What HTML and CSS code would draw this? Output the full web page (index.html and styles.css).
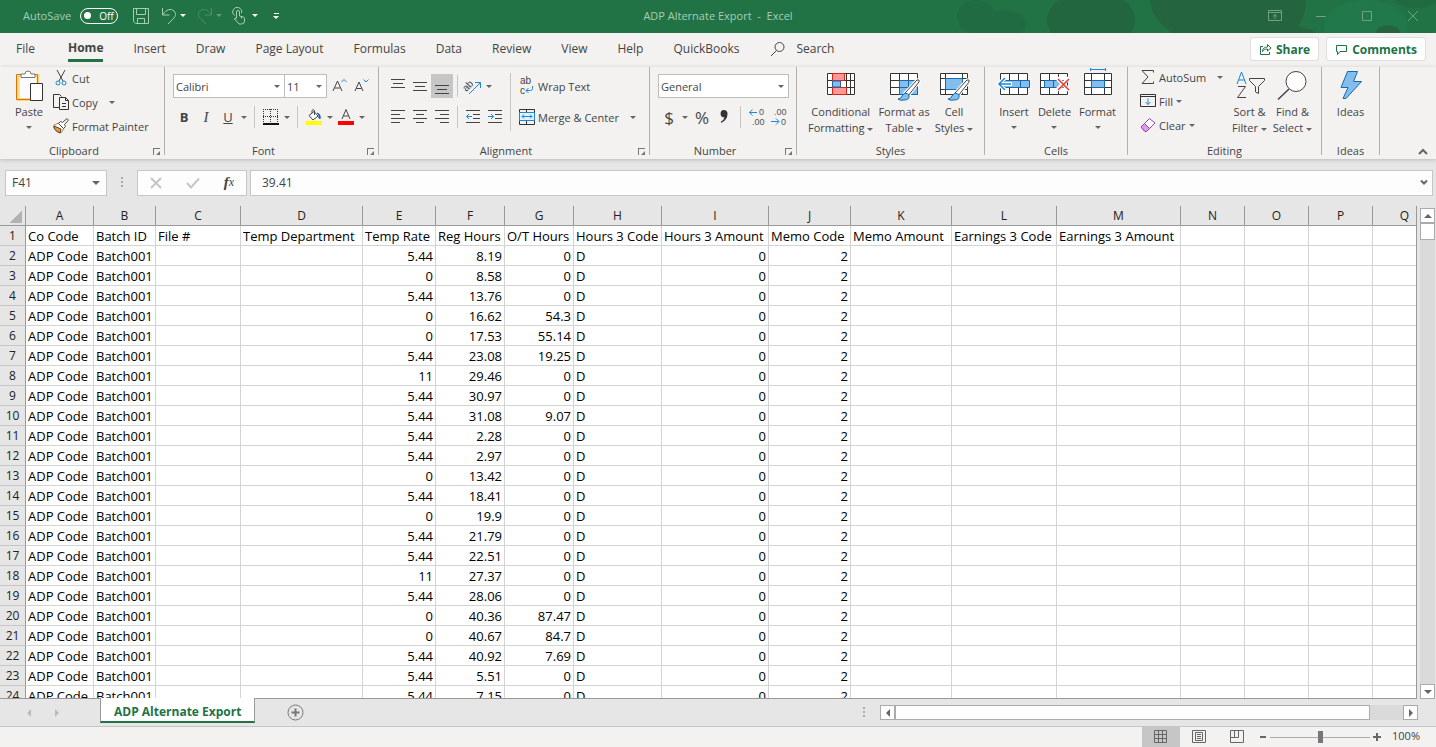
FILE: index.html
```html
<!DOCTYPE html>
<html lang="en">
<head>
    <meta charset="UTF-8">
    <meta name="viewport" content="width=device-width, initial-scale=1.0">
    <title>ADP Alternate Export - Excel</title>
    <link rel="stylesheet" href="styles.css">
</head>
<body>
    <header class="titlebar">
      <svg class="pattern" width="500" height="33" viewBox="0 0 500 33">
        <g fill="#216b43">
          <ellipse cx="40" cy="17" rx="19" ry="17"/>
          <ellipse cx="66" cy="24" rx="24" ry="14"/>
          <ellipse cx="480" cy="0" rx="22" ry="8"/>
        </g>
        <ellipse cx="155" cy="20" rx="44" ry="30" fill="#226640"/>
        <path d="M214 0h156q0 16-8 26l14 4 4 3H236q-22-16-22-33z" fill="#24653f"/>
        <ellipse cx="430" cy="26" rx="42" ry="26" fill="#21784a"/>
        <ellipse cx="452" cy="33" rx="12" ry="8" fill="#24653f"/>
      </svg>
      <label class="autosave">AutoSave
        <button class="switch"><span class="knob"></span>Off</button>
      </label>
      <div class="quick">
        <button aria-label="Save"><svg width="18" height="18" viewBox="0 0 18 18"><path d="M1.5 1.5h15v15h-13l-2-2zM4.500 1.500v6h9v-6M5.500 16.500v-5h7v5"/></svg></button>
        <button class="undo" aria-label="Undo"><svg width="16" height="18" viewBox="0 0 16 18"><path d="M1.500 1v7h7M2 7.500C5 2.500 10 1 13 4c3 3 1 6-1 8l-5 5"/></svg></button>
        <button aria-label="Undo list"><i class="caret"></i></button>
        <button class="off redo" aria-label="Redo"><svg width="16" height="18" viewBox="0 0 16 18"><path d="M14.500 1v7h-7M14 7.500C11 2.500 6 1 3 4c-3 3-1 6 1 8l5 5"/></svg></button>
        <button class="off" aria-label="Redo list"><i class="caret"></i></button>
        <button class="touch" aria-label="Touch mode"><svg width="14" height="18" viewBox="0 0 14 18"><path d="M2.500 8.500A4.500 4.500 0 1 1 9.500 6M4.500 11V5a1.500 1.500 0 0 1 3 0v4l4 1q1 .5 1 2v2q0 3-3 3H7L2.500 12q0-2 2 0M9.500 9.500v2"/></svg></button>
        <button aria-label="Touch mode list"><i class="caret"></i></button>
        <button class="more" aria-label="Customize toolbar"><i class="bar"></i><i class="caret"></i></button>
      </div>
      <h1>ADP Alternate Export&nbsp; -&nbsp; Excel</h1>
      <div class="window">
        <button aria-label="Ribbon display"><svg width="14" height="12" viewBox="0 0 14 12"><path d="M.5 .5h13v10H.5zM.5 2.500h13M7 9V4.500M5 6.500l2-2 2 2"/></svg></button>
        <button aria-label="Minimize"><svg width="12" height="12" viewBox="0 0 12 12"><path d="M1 6.500h10"/></svg></button>
        <button aria-label="Maximize"><svg width="12" height="12" viewBox="0 0 12 12"><path d="M1.500 1.500h9v9h-9z"/></svg></button>
        <button aria-label="Close"><svg width="12" height="12" viewBox="0 0 12 12"><path d="M1 1l10 10M11 1L1 11"/></svg></button>
      </div>
    </header>

    <nav class="tabs">
      <a href="#">File</a>
      <a href="#" class="current">Home</a>
      <a href="#">Insert</a>
      <a href="#">Draw</a>
      <a href="#">Page Layout</a>
      <a href="#">Formulas</a>
      <a href="#">Data</a>
      <a href="#">Review</a>
      <a href="#">View</a>
      <a href="#">Help</a>
      <a href="#">QuickBooks</a>
      <a href="#" class="search"><svg width="16" height="16" viewBox="0 0 16 16"><circle cx="9.500" cy="6" r="4.500"/><path d="M6.500 9.500L1 15"/></svg>Search</a>
      <div class="actions">
        <button><svg width="13" height="13" viewBox="0 0 13 13"><path d="M4 3.500H1.500v8h9V9M3.500 8.500c0-3 2-4.500 5-4.500V1.500L12 5 8.500 8V6c-2 0-4 .5-5 2.500z"/></svg>Share</button>
        <button><svg width="13" height="13" viewBox="0 0 13 13"><path d="M1.500 2.500h10v6H5l-2.500 3v-3h-1z"/></svg>Comments</button>
      </div>
    </nav>

    <main class="ribbon">
      <section class="group clipboard">
        <div class="tools">
          <button class="big paste">
            <svg width="32" height="32" viewBox="0 0 32 32"><path d="M5 4.500h20v24H5z" fill="#fbfbfb" stroke="#ffd67a" stroke-width="3"/><path d="M3.500 3.500h21v25h-21z" fill="none" stroke="#d9740e"/><path d="M8 6.500V3h4q0-3 3-3t3 3h4v3.500z" fill="#fff" stroke="#777"/><path d="M17.500 12.500h12v17h-12z" fill="#fff" stroke="#333"/></svg>
            <span>Paste</span><i class="caret"></i>
          </button>
          <div class="stack">
            <button><svg width="16" height="16" viewBox="0 0 16 16"><path d="M4 0l6 11M12 0L6 11" stroke="#444" fill="none"/><circle cx="5" cy="13" r="2" stroke="#1b87d6" fill="none"/><circle cx="11" cy="13" r="2" stroke="#1b87d6" fill="none"/></svg>Cut</button>
            <button><svg width="16" height="16" viewBox="0 0 16 16"><path d="M7 13.500H.5V.5h6l2 2M6.500 3.500h6l3 3v9h-9zM12.500 3.500v3h3M9 9.500h4M9 12.500h4" fill="none" stroke="#333"/></svg>Copy<i class="caret"></i></button>
            <button><svg width="16" height="16" viewBox="0 0 16 16"><path d="M1 7l5-2 5 5-3 5q-4-1-7-5z" fill="#fff" stroke="#e07b17"/><path d="M1 8l7 3-1 4q-4-1-6-5z" fill="#f4973b"/><path d="M5.500 5.500l2-2 2 1L14 .500l1.500 1.500-4 4.500 1 2-2 2z" fill="#fff" stroke="#444"/></svg>Format Painter</button>
          </div>
        </div>
        <h2>Clipboard</h2><i class="launch"></i>
      </section>

      <section class="group font">
        <div class="rows">
          <div class="row">
            <span class="combo family"><select aria-label="Font"><option>Calibri</option></select></span>
            <span class="combo size"><select aria-label="Font size"><option>11</option></select></span>
            <button class="ib grow" aria-label="Increase font size"><svg width="16" height="16" viewBox="0 0 16 16"><path d="M1 13L5.500 3 10 13M2.500 10h6" stroke="#444" fill="none"/><path d="M9.500 4L12 1.500 14.500 4" stroke="#1b87d6" fill="none"/></svg></button>
            <button class="ib" aria-label="Decrease font size"><svg width="16" height="16" viewBox="0 0 16 16"><path d="M1 13L5 4 9 13M2.500 10.500h5" stroke="#444" fill="none"/><path d="M9.500 1.500L12 4l2.500-2.500" stroke="#1b87d6" fill="none"/></svg></button>
          </div>
          <div class="row">
            <button class="ib bold">B</button><button class="ib italic">I</button><button class="ib under">U</button><button class="drop" aria-label="Underline styles"><i class="caret"></i></button>
            <i class="sep"></i>
            <button class="ib" aria-label="Borders"><svg width="16" height="16" viewBox="0 0 16 16"><path d="M0 .5h16M0 7.500h16M.5 0v14M7.500 0v14M14.500 0v14" stroke="#333" stroke-dasharray="1 1"/><path d="M0 15h16" stroke="#111" stroke-width="2"/></svg></button><button class="drop" aria-label="Border styles"><i class="caret"></i></button>
            <i class="sep"></i>
            <button class="ib" aria-label="Fill color"><svg width="16" height="16" viewBox="0 0 16 16"><path d="M3 6.500l5-4 4 4.500-5 4zM6 4V1.500q1.500-2 2.500 0V6" stroke="#444" fill="#fff"/><path d="M11 4q4 1 3 6-2-1-1-4z" fill="#1565a8" stroke="#1565a8"/><path d="M0 12h16v4H0z" fill="#ff0" stroke="none"/></svg></button><button class="drop" aria-label="Fill colors"><i class="caret"></i></button>
            <button class="ib" aria-label="Font color"><svg width="16" height="16" viewBox="0 0 16 16"><path d="M4 10L8 .500 12 10M5.500 7h5" stroke="#444" fill="none"/><path d="M0 12h16v4H0z" fill="red" stroke="none"/></svg></button><button class="drop" aria-label="Font colors"><i class="caret"></i></button>
          </div>
        </div>
        <h2>Font</h2><i class="launch"></i>
      </section>

      <section class="group alignment">
        <div class="tools">
          <div class="rows">
            <div class="row">
              <button class="ib" aria-label="Top align"><svg width="14" height="16" viewBox="0 0 14 16"><path d="M0 1.500h14M2 5.500h10M0 9.500h14"/></svg></button>
              <button class="ib" aria-label="Middle align"><svg width="14" height="16" viewBox="0 0 14 16"><path d="M0 4.500h14M2 8.500h10M0 12.500h14"/></svg></button>
              <button class="ib active" aria-label="Bottom align"><svg width="14" height="16" viewBox="0 0 14 16"><path d="M0 7.500h14M2 11.500h10M0 15.500h14"/></svg></button>
              <i class="sep"></i>
              <button class="ib" aria-label="Orientation"><svg width="18" height="18" viewBox="0 0 18 18"><text x="-2" y="11" transform="rotate(-45 5 8)" class="glyph">ab</text><path d="M5 17L16 6M11 5.500h5.500V11" stroke="#1b87d6"/></svg></button><button class="drop" aria-label="Orientation list"><i class="caret"></i></button>
            </div>
            <div class="row">
              <button class="ib" aria-label="Align left"><svg width="14" height="16" viewBox="0 0 14 16"><path d="M0 1.500h14M0 5.500h9M0 9.500h14M0 13.500h9"/></svg></button>
              <button class="ib" aria-label="Center"><svg width="14" height="16" viewBox="0 0 14 16"><path d="M0 1.500h14M3 5.500h8M0 9.500h14M3 13.500h8"/></svg></button>
              <button class="ib" aria-label="Align right"><svg width="14" height="16" viewBox="0 0 14 16"><path d="M0 1.500h14M5 5.500h9M0 9.500h14M5 13.500h9"/></svg></button>
              <i class="sep"></i>
              <button class="ib" aria-label="Decrease indent"><svg width="14" height="16" viewBox="0 0 14 16"><path d="M0 1.500h14M7 5.500h7M7 9.500h7M0 13.500h14"/><path d="M6 7.500H.5M3 5L.5 7.500 3 10" stroke="#1b87d6"/></svg></button>
              <button class="ib" aria-label="Increase indent"><svg width="14" height="16" viewBox="0 0 14 16"><path d="M0 1.500h14M7 5.500h7M7 9.500h7M0 13.500h14"/><path d="M0 7.500h5.500M3 5l2.500 2.500L3 10" stroke="#1b87d6"/></svg></button>
            </div>
          </div>
          <i class="sep tall"></i>
          <div class="rows text">
            <div class="row"><button><svg width="16" height="18" viewBox="0 0 16 18"><text x="1" y="7" class="glyph">ab</text><text x="1" y="17" class="glyph">c</text><path d="M13.500 9v2.500q0 2-2 2H7M9.500 11L7 13.500 9.500 16" stroke="#1b87d6"/></svg>Wrap Text</button></div>
            <div class="row"><button><svg width="16" height="16" viewBox="0 0 16 16"><path d="M.5 .5h15v15H.5zM7.500 0v4M7.500 12v4" stroke="#333"/><path d="M.5 3.500h15v8H.5z" fill="#e6f2fb" stroke="#1b87d6"/><path d="M3 7.500h10M5 5.500l-2 2 2 2M11 5.500l2 2-2 2" stroke="#1b87d6"/></svg>Merge &amp; Center<i class="caret"></i></button></div>
          </div>
        </div>
        <h2>Alignment</h2><i class="launch"></i>
      </section>

      <section class="group number">
        <div class="rows">
          <div class="row"><span class="combo format"><select aria-label="Number format"><option>General</option></select></span></div>
          <div class="row">
            <button class="ib symbol">$</button><button class="drop" aria-label="Currency list"><i class="caret"></i></button>
            <button class="ib symbol percentage">%</button>
            <button class="ib" aria-label="Comma style"><svg width="10" height="16" viewBox="0 0 10 16"><path d="M5 1a3.500 3.500 0 0 1 3.500 4Q8.500 11 2 14v-1.500Q5 11 5.500 8.300A3.600 3.600 0 1 1 5 1z" fill="#333" stroke="none"/></svg></button>
            <i class="sep"></i>
            <button class="ib" aria-label="Increase decimal"><svg width="16" height="18" viewBox="0 0 16 18"><text x="10" y="7" class="digits">0</text><text x="3" y="17" class="digits">.00</text><path d="M8 4.500H.5M3.500 1.500l-3 3 3 3" stroke="#1b87d6"/></svg></button>
            <button class="ib" aria-label="Decrease decimal"><svg width="16" height="18" viewBox="0 0 16 18"><text x="3" y="7" class="digits">.00</text><text x="10" y="17" class="digits">0</text><path d="M0 13.500h7.500M5 10.500l3 3-3 3" stroke="#1b87d6"/></svg></button>
          </div>
        </div>
        <h2>Number</h2><i class="launch"></i>
      </section>

      <section class="group styles">
        <div class="tools">
          <button class="big"><svg width="32" height="32" viewBox="0 0 32 32"><path d="M2.500 2.500h27v21h-27zM2 9.500h28M2 16.500h28M7.500 2v22M21.500 2v22M25.500 2v22" stroke="#333" fill="#fff"/><path d="M7.500 2.500h12v7h-12zM7.500 16.500h14v7h-14z" fill="#ff9797" stroke="#e0241b"/><path d="M7.500 10h8v6h-8z" fill="#83beec" stroke="#1769b0"/></svg><span>Conditional</span><span>Formatting<i class="caret"></i></span></button>
          <button class="big"><svg width="32" height="32" viewBox="0 0 32 32"><path d="M2.500 2.500h27v21h-27zM2 9.500h28M2 16.500h28M11.500 2v22M20.500 2v22" stroke="#333" fill="#fff"/><path d="M11.500 9.500h18v14h-18z" fill="#83beec"/><path d="M11.500 9.500h18v14h-18zM20.500 9.500v14M11.500 16.500h18" stroke="#1769b0"/><path d="M17 22L29 9q3-1 2 2L20 25z" fill="#fff" stroke="#fff" stroke-width="3"/><path d="M17 22L29 9q3-1 2 2L20 25z" fill="#fff" stroke="#444"/><path d="M10 28q3 0 4-3 3-5 7-1 1 5-5 5-4 1-6-1z" fill="#83beec" stroke="#1769b0"/></svg><span>Format as</span><span>Table<i class="caret"></i></span></button>
          <button class="big"><svg width="32" height="32" viewBox="0 0 32 32"><path d="M2.500 2.500h27v21h-27zM2 7.500h28M2 18.500h28M7.500 2v22M24.500 2v22" stroke="#333" fill="#fff"/><path d="M7.500 7.500h17v11h-17z" fill="#83beec" stroke="#1769b0"/><path d="M17 22L29 9q3-1 2 2L20 25z" fill="#fff" stroke="#fff" stroke-width="3"/><path d="M17 22L29 9q3-1 2 2L20 25z" fill="#fff" stroke="#444"/><path d="M10 28q3 0 4-3 3-5 7-1 1 5-5 5-4 1-6-1z" fill="#83beec" stroke="#1769b0"/></svg><span>Cell</span><span>Styles<i class="caret"></i></span></button>
        </div>
        <h2>Styles</h2>
      </section>

      <section class="group cells">
        <div class="tools">
          <button class="big"><svg width="32" height="32" viewBox="0 0 32 32"><path d="M2.500 2.500h27v21h-27zM2 9.500h28M2 16.500h28M11.500 2v22M20.500 2v22" stroke="#333" fill="#fff"/><path d="M6.500 9.500h25v7h-25zM22.500 9v8" fill="#83beec" stroke="#1769b0"/><path d="M14 13H1.500M7 7l-6 6 6 6" stroke="#fff" stroke-width="4"/><path d="M13 13H1.500M7 7l-6 6 6 6" stroke="#1b87d6" stroke-width="1.500"/></svg><span>Insert</span><i class="caret"></i></button>
          <button class="big"><svg width="32" height="32" viewBox="0 0 32 32"><path d="M2.500 2.500h27v21h-27zM2 9.500h28M2 16.500h28M11.500 2v22M20.500 2v22" stroke="#333" fill="#fff"/><path d="M6.500 9.500h16v7h-16zM15.500 9v8" fill="#83beec" stroke="#1769b0"/><path d="M19 7l12 12M31 7L19 19" stroke="#fff" stroke-width="4"/><path d="M20 8l11 11M31 8L20 19" stroke="#e8382e" stroke-width="1.500"/></svg><span>Delete</span><i class="caret"></i></button>
          <button class="big"><svg width="32" height="32" viewBox="0 0 32 32"><path d="M2.500 2.500h27v21h-27zM2 9.500h28M2 16.500h28M9.500 2v22M22.500 2v22" stroke="#333" fill="#fff"/><path d="M9.500 9.500h13v7h-13z" fill="#83beec" stroke="#1769b0"/><path d="M8.500 -3v3M23.500 -3v3M8 -1.500h16" stroke="#1b87d6"/></svg><span>Format</span><i class="caret"></i></button>
        </div>
        <h2>Cells</h2>
      </section>

      <section class="group editing">
        <div class="tools">
          <div class="stack">
            <button class="sum"><svg width="16" height="16" viewBox="0 0 16 16"><path d="M13.500 3.500v-2H2l6 6.500-6 6.500h11.500v-2"/></svg>AutoSum<i class="caret"></i></button>
            <button><svg width="16" height="16" viewBox="0 0 16 16"><path d="M.5 1.500h15v12H.5zM.5 3.500h15" stroke="#333"/><path d="M8 5.500v6M5.500 9L8 11.500 10.500 9" stroke="#1b87d6"/></svg>Fill<i class="caret"></i></button>
            <button><svg width="16" height="16" viewBox="0 0 16 16"><path d="M1 10l8.500-8.500L15 6l-8.500 8.500H5z" fill="#fff" stroke="#9b3fae"/><path d="M1 10l3.500-3.500 5 5-3 3H5z" fill="#dd9fe8" stroke="#9b3fae"/></svg>Clear<i class="caret"></i></button>
          </div>
          <button class="big"><svg width="32" height="32" viewBox="0 0 32 32"><path d="M3 13L7.500 1 12 13M4.500 9h6" stroke="#1b87d6"/><path d="M4 15.500h7.500L3.500 26.500H12M15.500 7.500h15v2l-6 6v7l-3-1.500v-5.500l-6-6z" stroke="#444"/></svg><span>Sort &amp;</span><span>Filter<i class="caret"></i></span></button>
          <button class="big"><svg width="32" height="32" viewBox="0 0 32 32"><circle cx="19" cy="10.500" r="10" fill="#fff" stroke="#444"/><path d="M12 18L1 28.500" stroke="#444" stroke-width="1.500"/></svg><span>Find &amp;</span><span>Select<i class="caret"></i></span></button>
        </div>
        <h2>Editing</h2>
      </section>

      <section class="group ideas">
        <div class="tools">
          <button class="big"><svg width="32" height="32" viewBox="0 0 32 32"><path d="M12.500 .500h10l-4 10h8L11 27.500H8l5-11H6z" fill="#83beec" stroke="#1769b0"/></svg><span>Ideas</span></button>
        </div>
        <h2>Ideas</h2>
      </section>
      <button class="collapse" aria-label="Collapse ribbon"><svg width="10" height="8" viewBox="0 0 10 8"><path d="M1 6l4-4 4 4" stroke="#666" stroke-width="2"/></svg></button>
    </main>

    <section class="formula">
      <button class="namebox"><span>F41</span><i class="caret large"></i></button>
      <i class="dots"></i>
      <div class="check">
        <button aria-label="Cancel"><svg width="12" height="12" viewBox="0 0 12 12"><path d="M1 1l10 10M11 1L1 11" stroke="#c6c6c6" stroke-width="2"/></svg></button>
        <button aria-label="Enter"><svg width="14" height="12" viewBox="0 0 14 12"><path d="M1 6l4 4.500L13 1.500" stroke="#c6c6c6" stroke-width="2"/></svg></button>
        <button class="fx"><b>f</b>x</button>
      </div>
      <label class="entry"><input type="text" value="39.41" aria-label="Formula"><svg width="8" height="7" viewBox="0 0 8 7"><path d="M1 1.500l3 3 3-3" stroke="#666" stroke-width="2"/></svg></label>
    </section>

    <section class="workspace">
      <div class="sheet">
        <table id="grid">
          <colgroup></colgroup>
          <thead></thead>
          <tbody></tbody>
        </table>
      </div>
      <div class="vscroll">
        <button aria-label="Scroll up"><i class="arrow up"></i></button>
        <i class="thumb"></i>
        <button class="end" aria-label="Scroll down"><i class="arrow down"></i></button>
      </div>
    </section>

    <section class="sheetbar">
      <button class="step" aria-label="Previous sheet"><i class="arrow left"></i></button>
      <button class="step" aria-label="Next sheet"><i class="arrow right"></i></button>
      <button class="sheettab">ADP Alternate Export</button>
      <button class="add" aria-label="New sheet"><svg width="17" height="17" viewBox="0 0 17 17"><circle cx="8.500" cy="8.500" r="7.500"/><path d="M4.500 8.500h8M8.500 4.500v8" stroke-width="2"/></svg></button>
      <i class="dots"></i>
      <div class="hscroll">
        <button aria-label="Scroll left"><i class="arrow left"></i></button>
        <i class="thumb"></i>
        <button aria-label="Scroll right"><i class="arrow right"></i></button>
      </div>
    </section>

    <footer class="status">
      <button class="on" aria-label="Normal"><svg width="14" height="14" viewBox="0 0 14 14"><path d="M.5 .5h12v12H.5zM.5 4.500h12M.5 8.500h12M4.500 .5v12M8.500 .5v12"/></svg></button>
      <button aria-label="Page layout view"><svg width="14" height="14" viewBox="0 0 14 14"><path d="M.5 .5h13v12H.5zM3.500 2.500h7v8h-7zM5 4.500h4M5 6.500h4M5 8.500h4"/></svg></button>
      <button aria-label="Page break view"><svg width="14" height="14" viewBox="0 0 14 14"><path d="M.5 .5h13v12H.5zM.5 7.500h8v-7M4.500 .5v7"/></svg></button>
      <button class="zoom" aria-label="Zoom out"><svg width="6" height="8" viewBox="0 0 6 8"><path d="M0 4h6" stroke-width="2"/></svg></button>
      <input type="range" min="0" max="100" value="50" aria-label="Zoom">
      <button class="zoom" aria-label="Zoom in"><svg width="8" height="8" viewBox="0 0 8 8"><path d="M0 4h8M4 0v8" stroke-width="2"/></svg></button>
      <button class="percent">100%</button>
    </footer>

    <script>
      const columns = [68, 62, 85, 122, 73, 69, 69, 88, 107, 82, 101, 105, 124, 64, 64, 64, 64];
      const headings = ["Co Code", "Batch ID", "File #", "Temp Department", "Temp Rate", "Reg Hours", "O/T Hours",
        "Hours 3 Code", "Hours 3 Amount", "Memo Code", "Memo Amount", "Earnings 3 Code", "Earnings 3 Amount"];

      // [rate, regular hours, overtime hours]
      const hours = [
        ["5.44", "8.19", "0"],
        ["0", "8.58", "0"],
        ["5.44", "13.76", "0"],
        ["0", "16.62", "54.3"],
        ["0", "17.53", "55.14"],
        ["5.44", "23.08", "19.25"],
        ["11", "29.46", "0"],
        ["5.44", "30.97", "0"],
        ["5.44", "31.08", "9.07"],
        ["5.44", "2.28", "0"],
        ["5.44", "2.97", "0"],
        ["0", "13.42", "0"],
        ["5.44", "18.41", "0"],
        ["0", "19.9", "0"],
        ["5.44", "21.79", "0"],
        ["5.44", "22.51", "0"],
        ["11", "27.37", "0"],
        ["5.44", "28.06", "0"],
        ["0", "40.36", "87.47"],
        ["0", "40.67", "84.7"],
        ["5.44", "40.92", "7.69"],
        ["5.44", "5.51", "0"],
        ["5.44", "7.15", "0"],
      ];

      const grid = document.querySelector("#grid");
      grid.querySelector("colgroup").innerHTML =
        [26, ...columns].map((w) => `<col style="width:${w}px">`).join("");

      const letters = columns.map((w, i) => `<th scope="col">${String.fromCharCode(65 + i)}</th>`);
      grid.querySelector("thead").innerHTML = `<tr><th class="corner"></th>${letters.join("")}</tr>`;

      const rows = [headings];
      hours.forEach(([rate, reg, ot]) => {
        rows.push(["ADP Code", "Batch001", "", "", rate, reg, ot, "D", "0", "2"]);
      });

      grid.querySelector("tbody").innerHTML = rows.map((row, r) => {
        const cells = columns.map((w, c) => {
          const value = row[c] || "";
          const isNumber = value !== "" && !isNaN(value);
          return `<td${isNumber ? ' class="num"' : ""}>${value}</td>`;
        });
        return `<tr><th scope="row">${r + 1}</th>${cells.join("")}</tr>`;
      }).join("");
    </script>
</body>
</html>
```
FILE: styles.css
```css
* {
    box-sizing: border-box;
    margin: 0;
    padding: 0;
}
body {
    display: flex;
    flex-direction: column;
    height: 100vh;
    overflow: hidden;
    background: #e6e6e6;
    color: #444;
    font-family: "Open Sans", "Noto Sans", sans-serif;
    font-size: 11px;
}
button {
    display: flex;
    align-items: center;
    justify-content: center;
    flex: none;
    border: none;
    background: none;
    color: inherit;
    font: inherit;
    white-space: nowrap;
}
svg {
    flex: none;
    overflow: visible;
    fill: none;
    stroke: #444;
}
i {
    flex: none;
}
.caret {
    display: inline-block;
    border: 3px solid transparent;
    border-top-color: #666;
    border-bottom: none;
}
.caret.large {
    border-width: 4px 4px 0;
}

/* title bar */
.titlebar {
    position: relative;
    display: flex;
    align-items: center;
    height: 33px;
    flex: none;
    padding: 0 0 2px 23px;
    background: #217346;
    color: #a5ceb5;
}
.pattern {
    position: absolute;
    right: 0;
    top: 0;
    overflow: hidden;
    stroke: none;
}
.autosave {
    display: flex;
    align-items: center;
    gap: 9px;
}
.switch {
    gap: 8px;
    width: 38px;
    height: 16px;
    border: 1px solid #fff;
    border-radius: 8px;
    color: #fff;
    font-size: 10px;
}
.knob {
    width: 7px;
    height: 7px;
    border-radius: 50%;
    background: #fff;
}
.quick {
    display: flex;
    align-items: center;
    margin-left: 14px;
}
.quick svg {
    stroke: #a5ceb5;
}
.quick .caret {
    border-top-color: #fff;
}
.undo, .redo {
    margin-left: 11px;
    margin-right: 3px;
}
.touch {
    margin-left: 10px;
    margin-right: 6px;
}
.off {
    opacity: 0.3;
}
.more {
    flex-direction: column;
    gap: 2px;
    margin-left: 15px;
}
.bar {
    width: 5px;
    height: 1px;
    background: #fff;
}
.titlebar h1 {
    position: absolute;
    left: 0;
    right: 0;
    text-align: center;
    font-size: 11px;
    font-weight: 400;
    pointer-events: none;
}
.window {
    position: relative;
    display: flex;
    margin-left: auto;
}
.window button {
    width: 46px;
    height: 30px;
}
.window svg {
    stroke: #6fa383;
}

/* tabs */
.tabs {
    display: flex;
    align-items: center;
    flex: none;
    height: 34px;
    padding: 0 11px 2px 1px;
    background: #f3f2f1;
    font-size: 12px;
}
.tabs a {
    padding: 0 15px;
    line-height: 24px;
    color: #444;
    text-decoration: none;
    white-space: nowrap;
}
.tabs .current {
    padding: 0;
    margin: 0 15px 0 18px;
    border-bottom: 3px solid #217346;
    line-height: 22px;
    font-weight: 700;
}
.tabs .search {
    display: flex;
    align-items: center;
    gap: 10px;
    padding-left: 16px;
}
.actions {
    display: flex;
    gap: 9px;
    margin-left: auto;
}
.actions button {
    gap: 4px;
    height: 22px;
    padding: 0 8px;
    border-radius: 2px;
    background: #fff;
    box-shadow: 0 0 0 1px #e1dfdd;
    color: #217346;
    font-weight: 700;
}
.actions svg {
    stroke: #217346;
}

/* ribbon */
.ribbon {
    display: flex;
    position: relative;
    z-index: 1;
    flex: none;
    height: 92px;
    background: #f3f2f1;
    box-shadow: 0 1px 4px #bbb;
}
.group {
    position: relative;
    display: flex;
    flex-direction: column;
    flex: none;
    height: 88px;
    border-right: 1px solid #b3b0ad;
}
.group h2 {
    margin-top: auto;
    line-height: 8px;
    text-align: center;
    font-size: 11px;
    font-weight: 400;
}
/* groups with a launcher keep room for it */
.group h2:not(:last-child) {
    padding-right: 16px;
}
.launch {
    position: absolute;
    right: 4px;
    bottom: 0;
    width: 7px;
    height: 7px;
    border-left: 1px solid #777;
    border-top: 1px solid #777;
}
.launch::after {
    content: "";
    position: absolute;
    right: 0;
    bottom: 0;
    border: 2px solid #777;
    border-left-color: transparent;
    border-top-color: transparent;
}
.clipboard { width: 165px; }
.font { width: 214px; }
.alignment { width: 271px; }
.number { width: 147px; }
.styles { width: 188px; }
.cells { width: 143px; }
.editing { width: 194px; }
.ideas { width: 58px; }
.tools {
    display: flex;
}
.big {
    flex-direction: column;
    justify-content: flex-start;
    padding-top: 4px;
}
.big svg {
    margin-bottom: 1px;
}
.big span {
    line-height: 16px;
}
.big > .caret {
    margin-top: 6px;
}
.big span .caret {
    margin-left: 3px;
    vertical-align: middle;
}
.paste {
    width: 53px;
    padding-left: 5px;
}
.stack {
    margin-top: -1px;
}
.stack button {
    gap: 3px;
    height: 24px;
}
.stack .caret, .rows.text .caret {
    margin-left: 8px;
}
.rows {
    display: flex;
    flex-direction: column;
    gap: 7px;
    padding: 7px 0 0 8px;
}
.row {
    display: flex;
    align-items: center;
    height: 24px;
}
.row button {
    gap: 3px;
}
.row .ib {
    width: 22px;
    height: 24px;
}
.ib.active {
    background: #c6c6c6;
}
.row .drop {
    width: 10px;
    height: 24px;
}
.sep {
    width: 1px;
    height: 22px;
    margin: 0 4px;
    background: #c8c6c4;
}
.font .sep, .number .sep {
    margin: 0 5px;
}
.sep.tall {
    height: 58px;
    margin: 6px 0 0 4px;
}
.combo {
    position: relative;
    height: 24px;
    border: 1px solid #bfbdbb;
    background: #fff;
}
.combo select {
    appearance: none;
    width: 100%;
    height: 100%;
    padding-left: 2px;
    border: none;
    background: none;
    color: #444;
    font: inherit;
}
.combo::after {
    content: "";
    position: absolute;
    right: 4px;
    top: 10px;
    border: 3px solid transparent;
    border-top-color: #666;
    border-bottom: none;
}
.family { width: 112px; }
.size { width: 43px; margin-left: -1px; }
.format { width: 131px; }
.grow {
    margin-left: 2px;
}
.bold {
    font-size: 13px;
    font-weight: 700;
}
.italic {
    font-family: "Liberation Serif", serif;
    font-size: 15px;
    font-style: italic;
}
.under {
    font-size: 13px;
    text-decoration: underline;
}
.row .symbol {
    font-size: 17px;
}
.percentage {
    margin-left: 1px;
}
.glyph, .digits {
    font-family: "Liberation Sans", Arial, sans-serif;
    font-size: 10px;
    fill: #444;
    stroke: none;
}
.digits {
    font-size: 9px;
    fill: #555;
}
.styles .tools {
    gap: 5px;
    padding-left: 11px;
}
.cells .tools {
    justify-content: space-around;
    padding: 0 7px 0 9px;
}
.editing .tools {
    padding-left: 12px;
}
.editing .stack {
    width: 88px;
    margin-top: -2px;
}
.stack .caret:last-child {
    margin-top: 1px;
}
.editing .stack .caret {
    margin-left: 0;
}
.editing .stack .sum .caret {
    margin-left: 8px;
}
.editing .big {
    width: 43px;
}
.ideas .tools {
    justify-content: center;
}
.collapse {
    margin: auto 8px 3px auto;
}

/* formula bar */
.formula {
    display: flex;
    align-items: center;
    flex: none;
    height: 47px;
    padding: 0 3px 0 5px;
    font-size: 12px;
}
.namebox, .check, .entry {
    display: flex;
    align-items: center;
    height: 26px;
    border: 1px solid #c6c6c6;
    background: #fdfdfd;
}
.namebox {
    justify-content: space-between;
    width: 102px;
    padding: 0 6px;
}
.dots {
    width: 2px;
    height: 11px;
    background: repeating-linear-gradient(#aaa 0 2px, transparent 2px 4px);
}
.formula .dots {
    margin: 0 14px;
}
.check {
    justify-content: space-around;
    width: 110px;
    margin-right: 3px;
}
.fx {
    font: italic 12px "Liberation Serif", serif;
}
.fx b {
    font-size: 15px;
}
.entry {
    flex: 1;
    padding: 0 4px 0 11px;
}
.entry input {
    flex: 1;
    min-width: 0;
    border: none;
    outline: none;
    background: none;
    color: #444;
    font: inherit;
}

/* sheet */
.workspace {
    display: flex;
    flex: 1;
    min-height: 0;
    gap: 3px;
}
.sheet {
    flex: 1;
    min-width: 0;
    overflow: hidden;
    border-right: 1px solid #999;
    border-bottom: 1px solid #999;
}
table {
    table-layout: fixed;
    width: 1437px;
    border-collapse: separate;
    border-spacing: 0;
    color: #000;
    font-size: 13px;
}
th, td {
    height: 20px;
    border-right: 1px solid #d4d4d4;
    border-bottom: 1px solid #d4d4d4;
    line-height: 18px;
    white-space: nowrap;
}
td {
    padding: 1px 2px 0;
    background: #fff;
}
th {
    background: #e6e6e6;
    color: #222;
    font-size: 12px;
    font-weight: 400;
}
thead th {
    border-color: #999;
}
tbody th {
    padding-top: 1px;
    border-right-color: #999;
    border-bottom-color: #c6c6c6;
}
.corner {
    background: linear-gradient(135deg, transparent 50%, #b2b2b2 50%) 10px 5px / 12px 12px no-repeat;
}
.num {
    text-align: right;
}
.vscroll {
    display: flex;
    flex-direction: column;
    width: 15px;
    margin: 2px 1px 0 0;
    background: #dadada;
}
.vscroll button, .hscroll button {
    width: 15px;
    height: 15px;
    border: 1px solid #ababab;
    background: #fff;
}
.thumb {
    border: 1px solid #ababab;
    background: #fff;
}
.vscroll .thumb {
    height: 17px;
}
.vscroll .end {
    margin-top: auto;
}
.arrow {
    border: 4px solid transparent;
}
.up { border-top: none; border-bottom-color: #666; }
.down { border-bottom: none; border-top-color: #666; }
.left { border-left: none; border-right-color: #666; }
.right { border-right: none; border-left-color: #666; }

/* sheet tabs */
.sheetbar {
    display: flex;
    align-items: center;
    flex: none;
    height: 27px;
    padding: 0 18px 0 15px;
}
.step {
    width: 28px;
}
.step .left { border-right-color: #bbb; }
.step .right { border-left-color: #bbb; }
.sheettab {
    align-self: flex-start;
    height: 25px;
    margin: -1px 32px 0 29px;
    padding: 3px 13px 0;
    border: 1px solid #999;
    border-top: none;
    border-bottom: 2px solid #217346;
    background: #fff;
    color: #217346;
    font-size: 12px;
    font-weight: 700;
}
.add svg {
    stroke: #777;
}
.sheetbar .dots {
    margin: 0 15px 0 auto;
}
.hscroll {
    display: flex;
    width: 538px;
    background: #dadada;
}
.hscroll .thumb {
    width: 475px;
    margin-right: auto;
}

/* status bar */
.status {
    display: flex;
    align-items: center;
    justify-content: flex-end;
    flex: none;
    height: 21px;
    padding-right: 16px;
    border-top: 1px solid #c6c6c6;
    background: #f3f2f1;
}
.status button {
    width: 38px;
    height: 20px;
}
.status svg {
    stroke: #666;
}
.status .on {
    background: #c6c6c6;
}
.status .zoom {
    width: 14px;
}
.status .percent {
    width: auto;
    margin-left: 8px;
    padding-bottom: 3px;
}
input[type="range"] {
    appearance: none;
    width: 100px;
    height: 12px;
    background: linear-gradient(#aaa, #aaa) center / 100% 1px no-repeat;
}
input[type="range"]::-webkit-slider-thumb {
    appearance: none;
    width: 5px;
    height: 12px;
    background: #777;
}
```
